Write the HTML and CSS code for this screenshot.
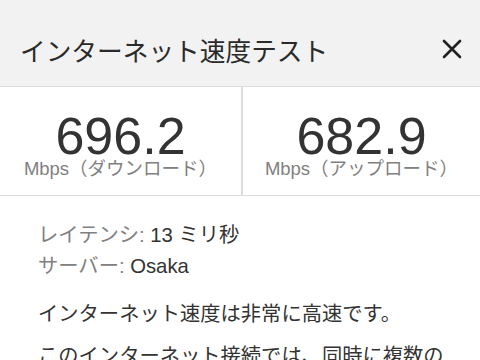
FILE: index.html
```html
<!DOCTYPE html>
<html lang="ja">
  <head>
    <meta charset="UTF-8" />
    <meta name="viewport" content="width=device-width, initial-scale=1.0" />
    <title>インターネット速度テスト</title>
    <link rel="stylesheet" href="styles.css">
  </head>
  <body>
    <div class="sheet">
      <header class="bar">
        <h1>インターネット速度テスト</h1>
        <button class="close" aria-label="閉じる">
          <svg width="20" height="20" viewBox="0 0 20 20">
            <path d="M2 2 L18 18 M18 2 L2 18" stroke="#222" stroke-width="2.6" stroke-linecap="round" fill="none" />
          </svg>
        </button>
      </header>

      <div class="stats">
        <div class="stat">
          <div class="value">696.2</div>
          <div class="unit">Mbps（ダウンロード）</div>
        </div>
        <div class="stat">
          <div class="value">682.9</div>
          <div class="unit">Mbps（アップロード）</div>
        </div>
      </div>

      <div class="details">
        <div class="meta">
          <p><span class="key">レイテンシ:</span> 13 ミリ秒</p>
          <p><span class="key">サーバー:</span> Osaka</p>
        </div>
        <p class="text">インターネット速度は非常に高速です。</p>
        <p class="text">このインターネット接続では、同時に複数のデバイスで高画質の動画をストリーミングできます。</p>
      </div>
    </div>
  </body>
</html>
```

FILE: styles.css
```css
:root {
  --bar: #f2f2f2;
  --line: #dcdcdc;
  --dark: #333;
  --muted: #808080;
}

* {
  box-sizing: border-box;
  margin: 0;
  padding: 0;
  font-family: "Liberation Sans", "Noto Sans CJK JP", sans-serif;
}

body {
  background: #fff;
  color: var(--dark);
  overflow: hidden;
}

.bar {
  display: flex;
  justify-content: space-between;
  align-items: center;
  height: 87px;
  padding: 12px 18px 0 20px;
  background: var(--bar);
  border-bottom: 1px solid var(--line);
}

.bar h1 {
  font-size: 25.7px;
  font-weight: 400;
  color: #2a2a2a;
}

.close {
  display: flex;
  border: none;
  background: none;
  padding: 0;
  cursor: pointer;
}

.stats {
  display: grid;
  grid-template-columns: 241px 1fr;
  height: 109px;
  border-bottom: 1px solid var(--line);
}

.stat {
  display: flex;
  flex-direction: column;
  align-items: center;
  padding-top: 28px;
}

.stat + .stat {
  border-left: 2px solid var(--line);
}

.value {
  font-size: 52px;
  line-height: 42px;
  color: var(--dark);
}

.unit {
  margin-top: 2px;
  font-size: 18.5px;
  line-height: 20px;
  color: var(--muted);
}

.details {
  padding: 24px 28px 0 38px;
}

.details p {
  font-size: 20.3px;
  line-height: 31px;
}

.key {
  color: var(--muted);
}

.meta {
  margin-bottom: 17px;
}

.text {
  margin-bottom: 11px;
}
```
